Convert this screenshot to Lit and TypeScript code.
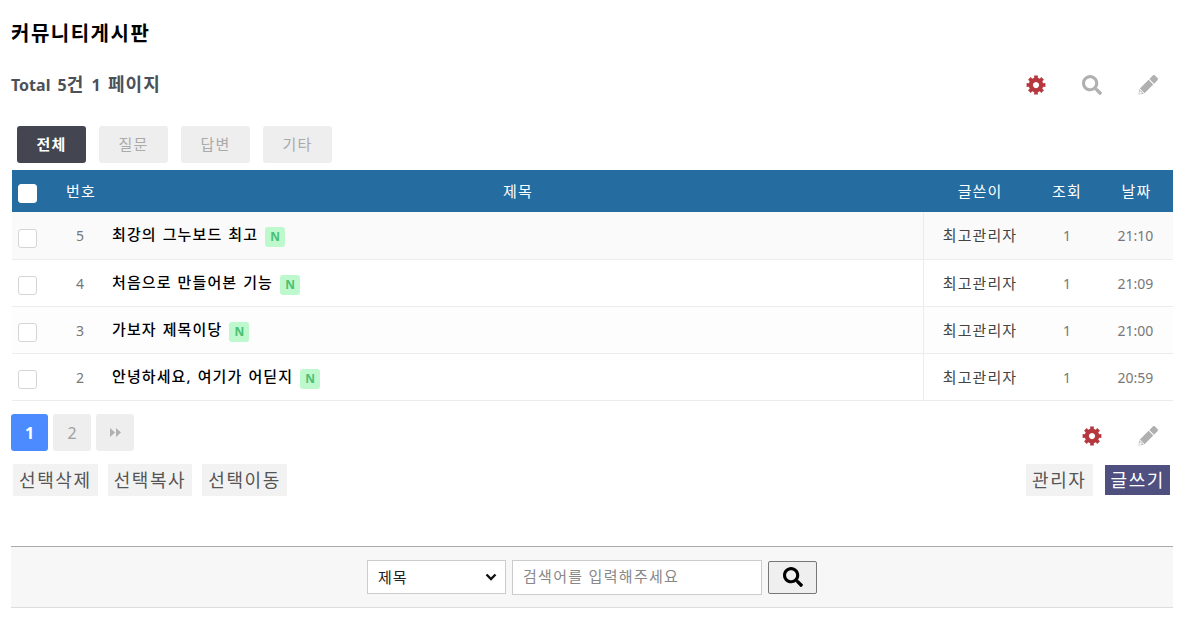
import { LitElement, html, css, svg } from 'lit';
import { customElement } from 'lit/decorators.js';

// 8 tooth cog, built once so the teeth stay even
const cogPath = () => {
  const pts: string[] = [];
  for (let i = 0; i < 8; i++) {
    const a = (i * Math.PI) / 4;
    const at = (r: number, off: number) =>
      `${(256 + r * Math.cos(a + off)).toFixed(1)} ${(256 + r * Math.sin(a + off)).toFixed(1)}`;
    pts.push(at(188, -0.24), at(245, -0.2), at(245, 0.2), at(188, 0.24));
  }
  return `M${pts.join('L')}Z M256 176a80 80 0 1 0 .01 0Z`;
};
const COG = cogPath();
const SEARCH =
  'M505 442.7L405.3 343c-4.5-4.5-10.6-7-17-7H372c27.6-35.3 44-79.7 44-128C416 93.1 322.9 0 208 0S0 93.1 0 208s93.1 208 208 208c48.3 0 92.7-16.4 128-44v16.3c0 6.4 2.5 12.5 7 17l99.7 99.7c9.4 9.4 24.6 9.4 33.9 0l28.3-28.3c9.4-9.4 9.4-24.6.1-34zM208 336c-70.7 0-128-57.2-128-128 0-70.7 57.2-128 128-128 70.7 0 128 57.2 128 128 0 70.7-57.2 128-128 128z';
const PENCIL =
  'M290 102l90-90c15-15 40-15 55 0l65 65c15 15 15 40 0 55l-90 90zM270 122L390 242 168 464 48 344zM32 364L148 480 14 498zM45 400l67 67-84 17z';

const icon = (d: string, size: number, cls: string) =>
  html`<svg class=${cls} width=${size} height=${size} viewBox="0 0 512 512">
    ${svg`<path fill="currentColor" fill-rule="evenodd" d=${d}></path>`}
  </svg>`;

const ROWS = [
  { num: 5, title: '최강의 그누보드 최고', author: '최고관리자', hit: 1, date: '21:10' },
  { num: 4, title: '처음으로 만들어본 기능', author: '최고관리자', hit: 1, date: '21:09' },
  { num: 3, title: '가보자 제목이당', author: '최고관리자', hit: 1, date: '21:00' },
  { num: 2, title: '안녕하세요, 여기가 어딛지', author: '최고관리자', hit: 1, date: '20:59' },
];

@customElement('app-root')
export class AppRoot extends LitElement {
  static styles = css`
    :host {
      display: block;
      height: 644px;
      background: #fff;
      font-family: 'Noto Sans', 'Noto Sans CJK KR', sans-serif;
      color: #333;
      overflow: hidden;
    }

    .page {
      padding: 0 27px 0 11px;
    }

    h1 {
      margin: 0;
      padding-top: 21px;
      font-size: 20px;
      line-height: 26px;
      font-weight: 700;
      letter-spacing: 1.5px;
      color: #000;
    }

    .summary {
      display: flex;
      align-items: center;
      justify-content: space-between;
      margin-top: 12px;
      height: 52px;
    }

    .total {
      margin-bottom: 4px;
      font-size: 16px;
      font-weight: 700;
      color: #4b5059;
      word-spacing: 3px;
    }

    .total .ko {
      font-size: 18px;
      letter-spacing: 1.1px;
    }

    .tools {
      display: flex;
      gap: 36px;
      padding-right: 15px;
    }

    .tools.low {
      padding-top: 6px;
    }

    .red {
      color: #b7373f;
    }

    .grey {
      color: #b0b0b0;
    }

    .tabs {
      display: flex;
      gap: 13px;
      margin: 15px 0 7px 6px;
    }

    .tab {
      width: 69px;
      height: 37px;
      border-radius: 3px;
      background: #eee;
      color: #aaa;
      font-size: 15px;
      letter-spacing: 1.1px;
      line-height: 37px;
      text-align: center;
    }

    .tab.on {
      background: #434650;
      color: #fff;
      font-weight: 700;
    }

    .row {
      display: grid;
      grid-template-columns: 44px 48px 820px 112px 62px 75px;
      align-items: center;
      margin-left: 1px;
      width: 1161px;
      font-size: 14px;
    }

    .head {
      height: 42px;
      background: #256ca0;
      color: #fff;
      font-size: 15px;
      letter-spacing: 1.1px;
    }

    .head > div {
      padding-bottom: 2px;
      text-align: center;
    }

    .head .subject {
      padding-left: 8px;
    }

    .head .nudge {
      padding-left: 2px;
    }

    .body {
      height: 47px;
      box-sizing: border-box;
      border-bottom: 1px solid #ececec;
      color: #777;
      background: #fff;
    }

    .body.first {
      height: 48px;
      background: #fafafa;
    }

    .body.alt {
      background: #fdfdfd;
    }

    .body > div {
      text-align: center;
    }

    .body > .subject {
      display: flex;
      align-items: center;
      gap: 7px;
      box-sizing: border-box;
      height: 100%;
      padding-left: 8px;
      border-right: 1px solid #ececec;
      color: #000;
      font-size: 15px;
      font-weight: 500;
      letter-spacing: 1.1px;
      word-spacing: 1px;
      text-align: left;
    }

    .ttl {
      padding-bottom: 4px;
    }

    .body > .author {
      padding-bottom: 2px;
      color: #444;
      font-size: 15px;
      letter-spacing: 1.1px;
    }

    .box {
      display: block;
      box-sizing: border-box;
      width: 19px;
      height: 19px;
      margin: 5px 0 0 6px;
      border: 1px solid #d5d5d5;
      border-radius: 3px;
      background: #fff;
    }

    .head .box {
      margin-top: 7px;
      border-color: #fff;
    }

    .new {
      display: inline-block;
      width: 20px;
      height: 20px;
      margin-top: 3px;
      border-radius: 3px;
      background: #bdf9cd;
      color: #4cc073;
      font-size: 12px;
      font-weight: 700;
      letter-spacing: 0;
      line-height: 20px;
      text-align: center;
    }

    .pager-line {
      display: flex;
      justify-content: space-between;
      align-items: center;
      margin-top: 13px;
    }

    .pager {
      display: flex;
      gap: 5px;
    }

    .pg {
      width: 38px;
      height: 37px;
      display: flex;
      align-items: center;
      justify-content: center;
      border-radius: 3px;
      background: #eee;
      color: #a0a0a0;
      font-size: 16px;
    }

    .pg.on {
      width: 37px;
      background: #4c8bff;
      color: #fff;
      font-weight: 700;
    }

    .arrows {
      color: #b0b0b0;
    }

    .actions {
      display: flex;
      justify-content: space-between;
      margin-top: 13px;
      padding: 0 3px 0 2px;
    }

    .group {
      display: flex;
      gap: 10px;
    }

    .btn {
      height: 32px;
      padding: 0 6px;
      background: #f2f2f2;
      color: #555;
      font-size: 18px;
      letter-spacing: 1.6px;
      line-height: 32px;
    }

    .btn.write {
      align-self: center;
      height: 30px;
      padding-right: 5px;
      line-height: 30px;
      background: #4f4f80;
      color: #fff;
    }

    .group.right {
      gap: 12px;
    }

    .search {
      display: flex;
      justify-content: center;
      align-items: center;
      gap: 6px;
      box-sizing: border-box;
      height: 62px;
      margin-top: 50px;
      border-top: 1px solid #aaa;
      border-bottom: 1px solid #ddd;
      background: #f7f7f7;
    }

    .select {
      display: flex;
      align-items: center;
      justify-content: space-between;
      box-sizing: border-box;
      width: 139px;
      height: 34px;
      padding: 0 8px 0 10px;
      border: 1px solid #ccc;
      background: #fff;
      color: #222;
      font-size: 15px;
      letter-spacing: 1px;
    }

    .select span {
      padding-bottom: 2px;
    }

    .input {
      box-sizing: border-box;
      width: 250px;
      height: 35px;
      padding: 0 10px;
      border: 1px solid #ccc;
      background: #fff;
      color: #888;
      font-size: 15px;
      letter-spacing: 1.3px;
      line-height: 30px;
    }

    .go {
      display: flex;
      align-items: center;
      justify-content: center;
      box-sizing: border-box;
      width: 49px;
      height: 33px;
      border: 1px solid #777;
      border-radius: 2px;
      background: #efefef;
      color: #000;
    }
  `;

  render() {
    return html`<div class="page">
      <h1>커뮤니티게시판</h1>
      ${this.renderSummary()} ${this.renderTabs()} ${this.renderTable()}
      ${this.renderPager()} ${this.renderActions()} ${this.renderSearch()}
    </div>`;
  }

  private renderSummary() {
    return html`<div class="summary">
      <div class="total">Total 5<span class="ko">건</span> 1 <span class="ko">페이지</span></div>
      <div class="tools">
        ${icon(COG, 20, 'red')} ${icon(SEARCH, 20, 'grey')} ${icon(PENCIL, 20, 'grey')}
      </div>
    </div>`;
  }

  private renderTabs() {
    return html`<div class="tabs">
      <div class="tab on">전체</div>
      <div class="tab">질문</div>
      <div class="tab">답변</div>
      <div class="tab">기타</div>
    </div>`;
  }

  private renderTable() {
    return html`<div class="row head">
        <div><span class="box"></span></div>
        <div class="nudge">번호</div>
        <div class="subject">제목</div>
        <div>글쓴이</div>
        <div>조회</div>
        <div class="nudge">날짜</div>
      </div>
      ${ROWS.map(
        (r, i) => html`<div class="row body ${i === 0 ? 'first' : i % 2 ? '' : 'alt'}">
          <div><span class="box"></span></div>
          <div>${r.num}</div>
          <div class="subject"><span class="ttl">${r.title}</span> <span class="new">N</span></div>
          <div class="author">${r.author}</div>
          <div>${r.hit}</div>
          <div>${r.date}</div>
        </div>`
      )}`;
  }

  private renderPager() {
    return html`<div class="pager-line">
      <div class="pager">
        <div class="pg on">1</div>
        <div class="pg">2</div>
        <div class="pg">
          <svg class="arrows" width="11" height="9" viewBox="0 0 11 9">
            <path fill="currentColor" d="M0 0l5 4.5L0 9zM6 0l5 4.5L6 9z"></path>
          </svg>
        </div>
      </div>
      <div class="tools low">${icon(COG, 20, 'red')} ${icon(PENCIL, 20, 'grey')}</div>
    </div>`;
  }

  private renderActions() {
    return html`<div class="actions">
      <div class="group">
        <div class="btn">선택삭제</div>
        <div class="btn">선택복사</div>
        <div class="btn">선택이동</div>
      </div>
      <div class="group right">
        <div class="btn">관리자</div>
        <div class="btn write">글쓰기</div>
      </div>
    </div>`;
  }

  private renderSearch() {
    return html`<div class="search">
      <div class="select">
        <span>제목</span>
        <svg width="12" height="8" viewBox="0 0 12 8">
          <path fill="none" stroke="#111" stroke-width="2.4" d="M1.5 1.5L6 6l4.5-4.5"></path>
        </svg>
      </div>
      <div class="input">검색어를 입력해주세요</div>
      <div class="go">${icon(SEARCH, 20, '')}</div>
    </div>`;
  }
}
